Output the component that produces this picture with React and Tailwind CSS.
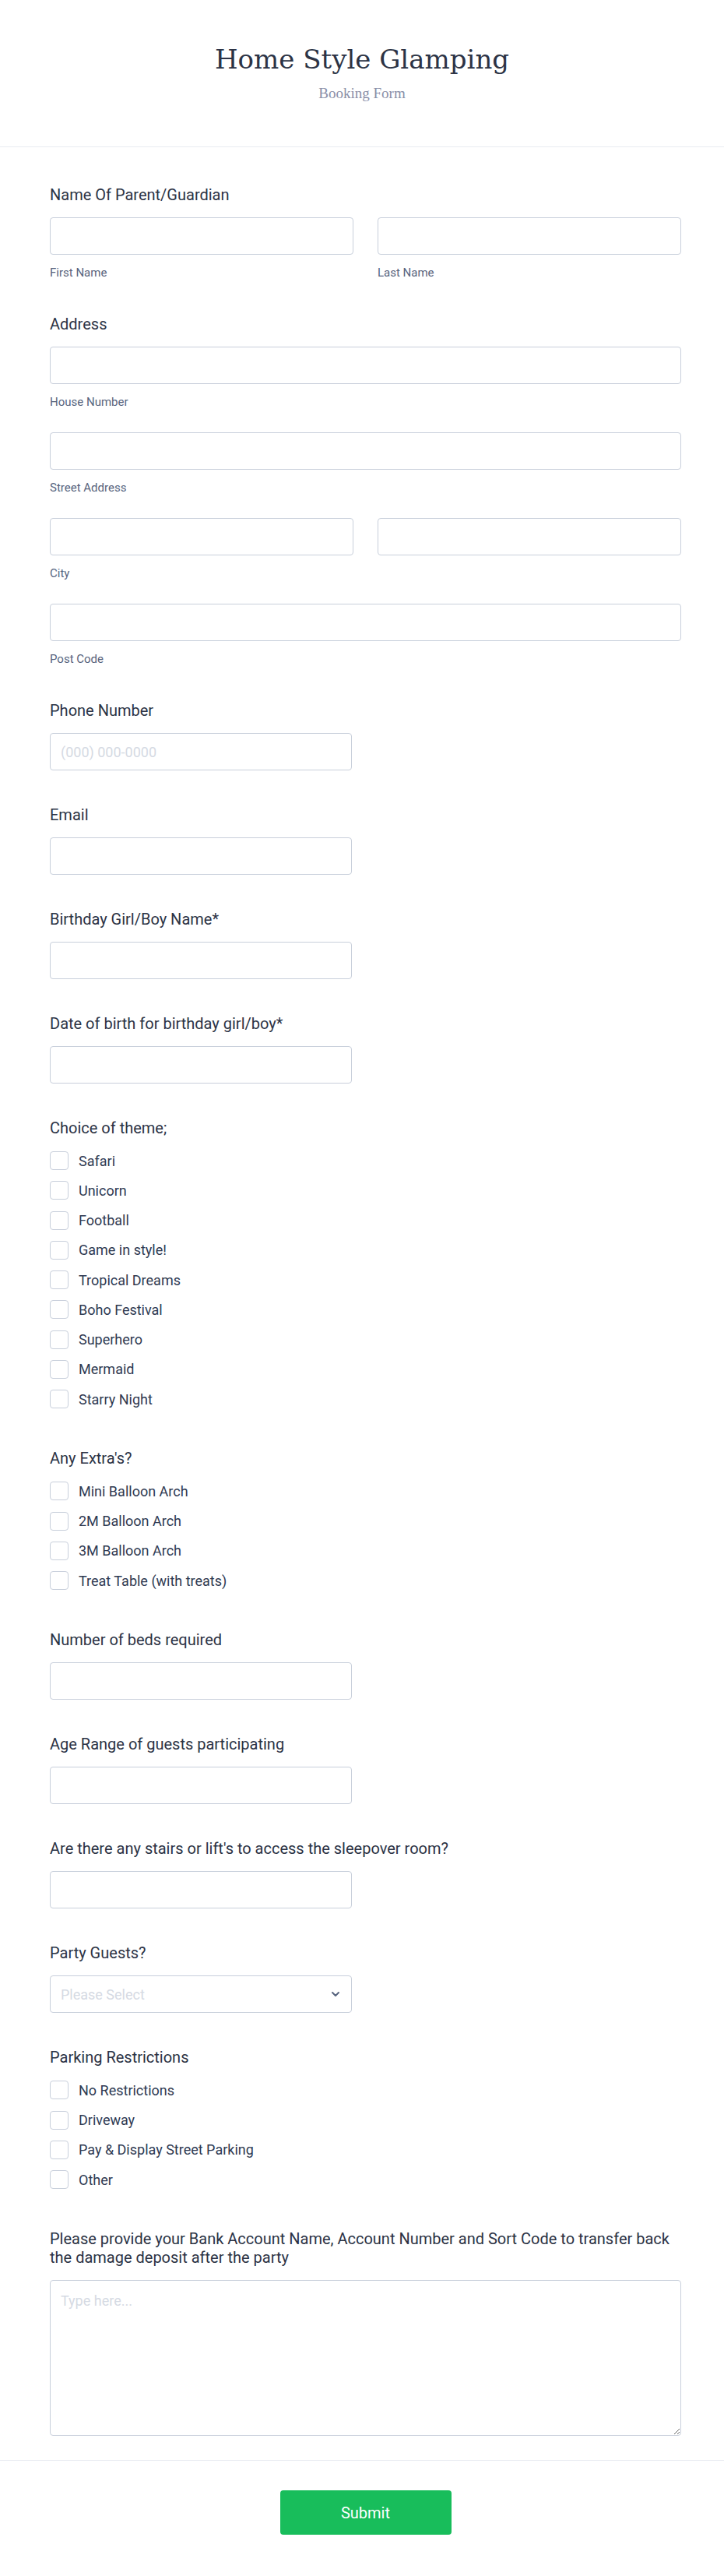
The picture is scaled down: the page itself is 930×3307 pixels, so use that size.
import React from 'react';
import { ChevronDown } from 'lucide-react';

const themes = ['Safari', 'Unicorn', 'Football', 'Game in style!', 'Tropical Dreams', 'Boho Festival', 'Superhero', 'Mermaid', 'Starry Night'];
const extras = ['Mini Balloon Arch', '2M Balloon Arch', '3M Balloon Arch', 'Treat Table (with treats)'];
const parking = ['No Restrictions', 'Driveway', 'Pay & Display Street Parking', 'Other'];

const inputCls =
  'block h-[48px] w-full rounded-[4px] border border-[#c8cfdb] bg-white px-[13px] text-[18px] text-[#2c3345] placeholder:text-[#d5dae3] outline-none';

function Label({ children }) {
  return <label className="block text-[20px] leading-6 text-[#2c3345]">{children}</label>;
}

function SubLabel({ children }) {
  return <span className="mt-[14px] block text-[15px] leading-[18px] text-[#57647e]">{children}</span>;
}

function TextField({ label, placeholder }) {
  return (
    <div>
      <Label>{label}</Label>
      <div className="mt-[17px] w-[388px]">
        <input type="text" placeholder={placeholder} className={inputCls} />
      </div>
    </div>
  );
}

function CheckGroup({ label, options }) {
  return (
    <div>
      <Label>{label}</Label>
      <div className="mt-[11px] flex flex-col">
        {options.map((o) => (
          <label key={o} className="flex h-[38.25px] items-center gap-[13px]">
            <span className="block h-[24px] w-[24px] shrink-0 rounded-[4px] border border-[#c8cfdb] bg-white" />
            <span className="text-[18px] text-[#2f3a52]">{o}</span>
          </label>
        ))}
      </div>
    </div>
  );
}

export default function App() {
  return (
    <div className="min-h-screen bg-white" style={{ fontFamily: 'Roboto, "Noto Sans", sans-serif' }}>
      <header className="h-[189px] border-b border-[#e8ebf1] pt-[54px] text-center">
        <h1 className="text-[34px] leading-[44px] text-[#2c3345]" style={{ fontFamily: '"DejaVu Serif", "Liberation Serif", serif' }}>
          Home Style Glamping
        </h1>
        <p className="mt-[10px] text-[19px] leading-6 text-[#8a8fa8]" style={{ fontFamily: '"Liberation Serif", serif' }}>
          Booking Form
        </p>
      </header>

      <form className="flex flex-col gap-[45px] border-b border-[#e8ebf1] pb-[31px] pl-16 pr-[55px] pt-[49px]">
        <div>
          <Label>Name Of Parent/Guardian</Label>
          <div className="mt-[17px] grid grid-cols-2 gap-x-[31px]">
            <div>
              <input type="text" className={inputCls} />
              <SubLabel>First Name</SubLabel>
            </div>
            <div>
              <input type="text" className={inputCls} />
              <SubLabel>Last Name</SubLabel>
            </div>
          </div>
        </div>

        <div>
          <Label>Address</Label>
          <div className="mt-[17px] flex flex-col gap-[30px]">
            <div>
              <input type="text" className={inputCls} />
              <SubLabel>House Number</SubLabel>
            </div>
            <div>
              <input type="text" className={inputCls} />
              <SubLabel>Street Address</SubLabel>
            </div>
            <div className="grid grid-cols-2 gap-x-[31px]">
              <div>
                <input type="text" className={inputCls} />
                <SubLabel>City</SubLabel>
              </div>
              <div>
                <input type="text" className={inputCls} />
              </div>
            </div>
            <div>
              <input type="text" className={inputCls} />
              <SubLabel>Post Code</SubLabel>
            </div>
          </div>
        </div>

        <TextField label="Phone Number" placeholder="(000) 000-0000" />
        <TextField label="Email" />
        <TextField label="Birthday Girl/Boy Name*" />
        <TextField label="Date of birth for birthday girl/boy*" />

        <CheckGroup label="Choice of theme;" options={themes} />
        <CheckGroup label="Any Extra's?" options={extras} />

        <TextField label="Number of beds required" />
        <TextField label="Age Range of guests participating" />
        <TextField label="Are there any stairs or lift's to access the sleepover room?" />

        <div>
          <Label>Party Guests?</Label>
          <div className="relative mt-[17px] w-[388px]">
            <div className="flex h-[48px] items-center rounded-[4px] border border-[#c8cfdb] bg-white px-[13px] text-[18px] text-[#d5dae3]">
              Please Select
            </div>
            <ChevronDown className="absolute right-[13px] top-[16px] h-[16px] w-[16px] text-[#57647e]" strokeWidth={3} />
          </div>
        </div>

        <CheckGroup label="Parking Restrictions" options={parking} />

        <div>
          <Label>
            Please provide your Bank Account Name, Account Number and Sort Code to transfer back the damage deposit after the party
          </Label>
          <textarea
            placeholder="Type here..."
            className="mt-[17px] block h-[200px] w-full rounded-[4px] border border-[#c8cfdb] bg-white px-[13px] py-[14px] text-[18px] leading-6 text-[#2c3345] placeholder:text-[#d5dae3] outline-none"
          />
        </div>
      </form>

      <div className="flex justify-center pb-[51px] pl-16 pr-[55px] pt-[38px]">
        <button type="button" className="h-[57px] w-[220px] rounded-[4px] bg-[#18bd5b] text-[20px] text-white">
          Submit
        </button>
      </div>
    </div>
  );
}
